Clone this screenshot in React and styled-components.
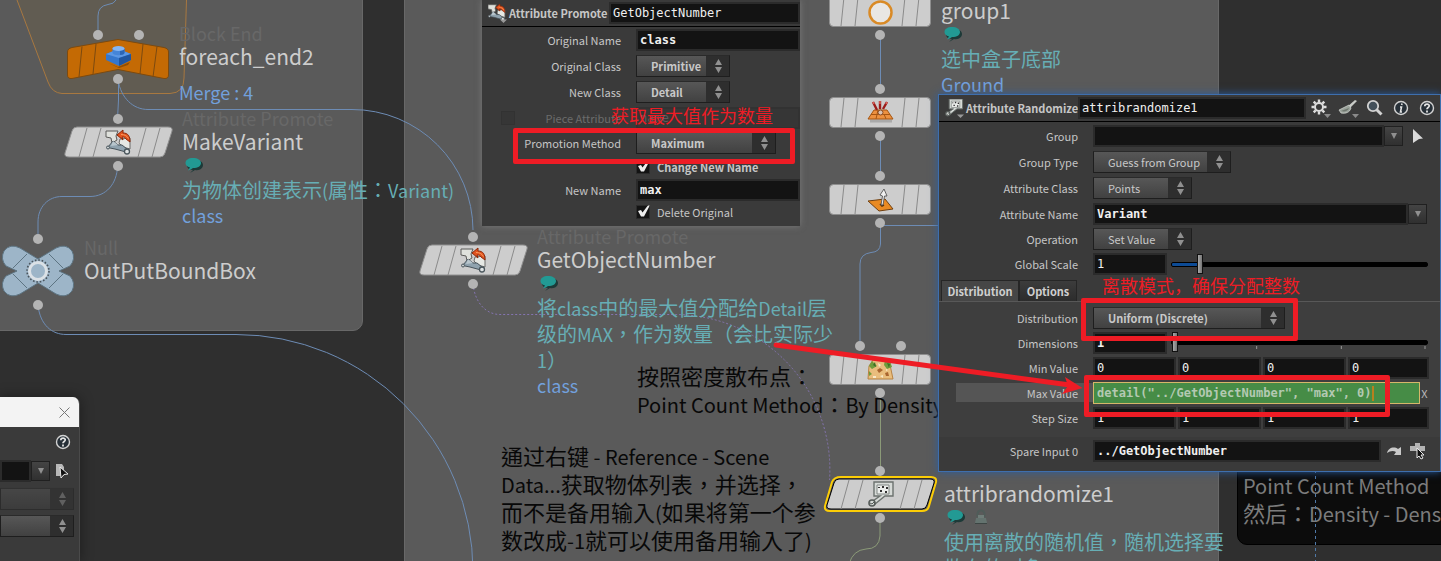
import React from "react";
import styled, { createGlobalStyle, css } from "styled-components";

const SANS = '"Noto Sans CJK TC", "Noto Sans CJK SC", sans-serif';
const MONO = '"DejaVu Sans Mono", "Liberation Mono", monospace';
const RED = "#ee1c25";
const WIRE = "#6d8cb5";

const GlobalStyle = createGlobalStyle`
  * { box-sizing: border-box; }
  body { margin: 0; background: #2f2f2f; font-family: ${SANS}; }
  input, select, button { font-family: inherit; margin: 0; border-radius: 0; }
`;

/* ---------- canvas ---------- */
const Canvas = styled.main`
  position: relative;
  width: 100%;
  height: 100vh;
  overflow: hidden;
  background: #2f2f2f;
`;
const NetworkBox = styled.section`
  position: absolute;
  left: ${(p) => p.$x}px;
  top: -10px;
  width: ${(p) => p.$w}px;
  ${(p) => (p.$h ? `height: ${p.$h}px;` : "bottom: -10px;")}
  background: #5a5a5a;
  border: 1px solid #686868;
  border-radius: 10px;
`;
const Overlay = styled.svg`
  position: absolute;
  left: 0;
  top: 0;
  width: 100%;
  height: 100%;
  overflow: visible;
  pointer-events: none;
  fill: none;
`;

/* ---------- nodes ---------- */
const NodeWrap = styled.article`
  position: absolute;
  left: ${(p) => p.$x}px;
  top: ${(p) => p.$y}px;
  display: flex;
  align-items: flex-start;
  gap: 10px;
`;
const Glyph = styled.svg`
  flex: none;
  margin-top: 2px;
  overflow: visible;
`;
const NodeInfo = styled.div`
  white-space: nowrap;
`;
const TypeName = styled.div`
  height: 22px;
  line-height: 22px;
  font-size: 18px;
  color: #686868;
`;
const NodeName = styled.div`
  height: 24px;
  line-height: 24px;
  font-size: 21px;
  color: #cdcdcd;
`;
const Badges = styled.div`
  height: 24px;
  display: flex;
  align-items: center;
  gap: 7px;
  padding-left: 2px;
`;
const Comment = styled.p`
  margin: 0;
  line-height: 26px;
  font-size: 18px;
  color: #67aeb5;
`;
const Descriptor = styled.div`
  margin-top: ${(p) => p.$gap || 0}px;
  line-height: 24px;
  font-size: 18px;
  color: #72a0dc;
`;
const Cjk = styled.span`
  font-size: ${(p) => p.$size}px;
`;
const Mixed = ({ text, size }) =>
  text.split(/([\u2e80-\uffef]+)/).filter(Boolean).map((run, i) =>
    /[\u2e80-\uffef]/.test(run) ? <Cjk key={i} $size={size}>{run}</Cjk> : run
  );

const Note = styled.p`
  position: absolute;
  left: ${(p) => p.$x}px;
  top: ${(p) => p.$y}px;
  margin: 0;
  white-space: nowrap;
  line-height: 27px;
  font-size: 20px;
  color: #080808;
`;
const DarkNote = styled.aside`
  position: absolute;
  left: 1237px;
  top: 440px;
  width: 300px;
  height: 105px;
  padding: 31px 5px 0;
  background: #0c0c0c;
  border: 1px solid #000;
  border-radius: 10px;
  white-space: nowrap;
  line-height: 27px;
  font-size: 20px;
  color: #7c7c7c;
`;

const Bubble = () => (
  <svg width="20" height="16" viewBox="0 0 20 16" aria-hidden="true">
    <path d="M5 15l3-3C3 12 2 9 2 7c0-3 3-5 8-5s8 2 8 5-3 6-8 5z" fill="#1d3a38" transform="translate(1 1)" />
    <path d="M4 13.500l2-3C3 10 1.500 8 1.500 6c0-3 3-5 7.500-5s8 2 8 5-3 5-8 5c-1.500 1-3 2-5 2.500z" fill="#229a94" />
  </svg>
);
const LockBadge = () => (
  <svg width="16" height="16" viewBox="0 0 16 16" aria-hidden="true">
    <path d="M4.500 8V5a3.500 3.500 0 0 1 7 0v3" stroke="#4f5c59" strokeWidth="2" fill="none" />
    <path d="M5 6h6v3H5z" fill="#6f7d79" />
    <path d="M3 9h10l1 5H2z" fill="#64736f" />
    <path d="M2 14.500h12" stroke="#3c4543" />
  </svg>
);

const Dot = ({ x, y }) => <circle cx={x} cy={y} r="5" fill="#b4b4b4" />;

const PromoteArt = () => (
  <g strokeLinejoin="round">
    <path d="M0 1H12L10 6L11 10L6 13L5 8L0 7z" fill="#dfe1dc" stroke="#5a5a58" />
    <path d="M14 9L24 8V19L17 17L13 13z" fill="#e6e8e4" stroke="#6c6c6a" />
    <path d="M2 17L7 11L12 15L16 15L21 19L20 22L9 19L4 18z" fill="#8fa2ae" stroke="#47535b" />
    <path d="M7 11L12 15L5 16z" fill="#b9c6cd" />
    <path d="M11 5L17 0V3C22 3 24 6 24 12L20 9C19 7 18 7 16 7L17 10z" fill="#e2531f" stroke="#8c2808" />
    <path d="M15 4.500C19 4.500 21 6 22.500 8.500" fill="none" stroke="#f79a5c" />
    <circle cx="21" cy="21.500" r="2.500" fill="#dfe3e4" stroke="#4a565c" strokeWidth="1.300" />
    <circle cx="2" cy="17.500" r="1.500" fill="#c9ced0" stroke="#4a565c" />
  </g>
);
const BlockArt = () => (
  <g>
    <path d="M2 18L12 22L24 17L22 20L13 23z" fill="#5b3000" opacity=".5" />
    <path d="M0 9L12.500 4L25 9V15L13 21L0 15z" fill="#3577cd" />
    <path d="M0 9L12.500 4L25 9L13 13z" fill="#5b97e4" />
    <path d="M13 13L25 9V15L13 21z" fill="#1f559f" />
    <path d="M6.500 3.500V8C8 11 17 11 18.500 8V3.500z" fill="#4585d8" />
    <path d="M14 10C17 10 18 9 18.500 8V3.500H14z" fill="#2c66b5" />
    <ellipse cx="12.500" cy="3.500" rx="6" ry="2.500" fill="#86b6f2" />
  </g>
);
const RingArt = () => (
  <circle cx="12.500" cy="12.500" r="11" fill="#e9e7e4" stroke="#d98a26" strokeWidth="2.500" />
);
const ScatterArt = () => (
  <g>
    <path d="M2 20H24" stroke="#888" strokeWidth="3" opacity=".5" />
    <path d="M6 9H19L25 18H0z" fill="#ec9140" stroke="#a65511" />
    <path d="M10 9L8 18M16 13L18 18M3 13.500H22" stroke="#a65511" />
    <path d="M5 1L9 9M12 0V8M19 1L15 8" stroke="#9c1d1a" strokeWidth="2.400" />
    <path d="M5 1L6 3M12 0V3M19 1L18 3" stroke="#d9605a" strokeWidth="1.500" />
    <circle cx="12.500" cy="11.500" r="2.500" fill="#d8c3b4" stroke="#8b4b22" />
  </g>
);
const NormalArt = () => (
  <g>
    <path d="M0 13L17 11L25 21L11 23z" fill="#e98a22" stroke="#704010" />
    <path d="M12 16L14 18L16 17" fill="none" stroke="#5b3208" strokeWidth="1.500" />
    <path d="M13 17L14.500 8L12 7L16 1L19 8L16.500 8L15 17z" fill="#f0f0f0" stroke="#555" strokeWidth=".9" />
  </g>
);
const TerrainArt = () => (
  <g>
    <path d="M1 8L5 2H21L25 21H0z" fill="#e9bd7d" stroke="#b88342" />
    <path d="M4 3L9 8L4 11L1 8zM17 2L22 3L24 9L19 11L16 7zM1 13L4 16L1 18z" fill="#6f9c3c" />
    <path d="M5 7L7 4L8 9zM19 5L22 6L21 10z" fill="#3f6f25" />
    <path d="M9 12L12 10L15 12L11 15zM17 15L20 14L21 18L18 18z" fill="#a9652f" />
    <path d="M10 5L13 7L11 9zM5 18H8V20H5zM12 18L15 17V20zM18 11L20 12L18 13z" fill="#f8e9c8" />
  </g>
);
const RandomArt = () => (
  <g>
    <path d="M6 0H25V14H17L7 22L5 19L12 14H6z" fill="#d6dad7" stroke="#6c726f" strokeWidth="1.400" />
    <path d="M9 3H21V12H9z" fill="#eceeec" stroke="#808683" />
    <path d="M10 5H12V6H10zM14 4H16V6H14zM18 5H20V7H18zM12 8H14V10H12zM17 9H19V11H17z" fill="#333" />
    <circle cx="4" cy="21" r="3" fill="#d6dad7" stroke="#555b58" strokeWidth="1.600" />
    <path d="M2 21L4 22L6 20" fill="none" stroke="#555b58" />
  </g>
);

const SlantBody = ({ selected, art }) => (
  <g>
    <g transform="translate(1 0)">
      {selected && (
        <path d="M14 16H104Q110 16 109 21L102 45Q101 50 95 50H3Q-3 50 -2 45L5 21Q7 16 14 16z" fill="none" stroke="#fccd06" strokeWidth="2" />
      )}
      <path d="M12 18H103Q108 18 107 22L100 44Q99 48 95 48H4Q-1 48 0 44L7 22Q8 18 12 18z" fill="#cdcdcd" stroke={selected ? "#000" : "#909090"} />
      <path d="M22 19L14 48M36 19L28 48M81 19L73 48M95 19L87 48" stroke="#8a8a8a" />
    </g>
    <g transform="translate(42 21)">{art}</g>
  </g>
);
const FlatBody = ({ art }) => (
  <g>
    <rect x=".5" y="18.500" width="101" height="30" rx="4" fill="#cdcdcd" stroke="#8e8e8e" />
    <path d="M15 19L12 48M29 19L26 48M76 19L73 48M90 19L87 48" stroke="#8a8a8a" />
    <g transform="translate(39 22)">{art}</g>
  </g>
);

const FlatNode = ({ y, art, ins = [51], children }) => (
  <NodeWrap $x={829} $y={y}>
    <Glyph width="102" height="64">
      <FlatBody art={art} />
      {ins.map((x) => <Dot key={x} x={x} y={10} />)}
      <Dot x={51} y={57} />
    </Glyph>
    {children}
  </NodeWrap>
);

/* ---------- parameter windows ---------- */
const Window = styled.section`
  position: absolute;
  left: ${(p) => p.$x}px;
  top: ${(p) => p.$y}px;
  width: ${(p) => p.$w}px;
  overflow: hidden;
  background: #3a3a3a;
  color: #c6c6c6;
  font-size: 11px;
  ${(p) =>
    p.$active
      ? css`border: 1px solid #3e6fae; box-shadow: 0 0 8px #2a5da0;`
      : css`box-shadow: 0 0 6px #7a7a7a;`}
`;
const Header = styled.header`
  display: flex;
  align-items: center;
  height: ${(p) => p.$h}px;
  padding-left: 6px;
  border-bottom: 1px solid #000;
`;
const Title = styled.h2`
  flex: none;
  width: ${(p) => p.$w}px;
  margin: 0;
  padding-left: 2px;
  font-size: 11px;
  line-height: 20px;
  font-weight: 700;
  white-space: nowrap;
`;
const Rows = styled.div`
  padding: ${(p) => p.$pad || "2px 0"};
  background: ${(p) => p.$bg || "transparent"};
`;
const Row = styled.div`
  display: grid;
  grid-template-columns: 154px minmax(0, 1fr);
  align-items: center;
  height: ${(p) => p.$h || 26}px;
  padding-right: ${(p) => p.$right || 0}px;
`;
const LabelCell = styled.div`
  display: flex;
  align-items: center;
  justify-content: flex-end;
  height: 19px;
  margin-left: 17px;
  padding-right: 15px;
  background: ${(p) => (p.$lit ? "#555" : "transparent")};
  color: ${(p) => (p.$dim ? "#6c6c6c" : "#c6c6c6")};
  white-space: nowrap;
`;
const Controls = styled.div`
  display: flex;
  align-items: center;
`;
const Field = styled.input.attrs({ spellCheck: false })`
  flex: ${(p) => (p.$w ? "none" : "1")};
  width: ${(p) => (p.$w ? p.$w + "px" : "100%")};
  min-width: 0;
  height: 22px;
  padding: 0 2px;
  border: 2px solid #2b2b2b;
  background: #131313;
  color: #f0f0f0;
  outline: none;
  font-family: ${MONO};
  font-size: 12px;
  font-weight: ${(p) => (p.$bold ? 700 : 400)};
  &:disabled { background: #363636; border-color: #323232; color: #5c5c5c; }
`;
const ExprWrap = styled.div`
  position: relative;
  flex: 1;
  display: flex;
`;
const ExprField = styled(Field)`
  background: #468c46;
  border: 1px solid #d6b76a;
  padding: 0 3px;
  color: #b4c9b2;
`;
const Caret = styled.span`
  position: absolute;
  left: 279px;
  top: 4px;
  width: 2px;
  height: 15px;
  background: #b8801e;
`;
const SelectWrap = styled.div`
  position: relative;
  width: ${(p) => p.$w}px;
  height: 22px;
  border: 1px solid #1e1e1e;
  border-top-color: #2a2a2a;
  background: linear-gradient(90deg, transparent calc(100% - 23px), #2e2e2e 0),
    linear-gradient(#575757, #414141);
  opacity: ${(p) => (p.$off ? 0.45 : 1)};
  svg { position: absolute; right: 6px; top: 3px; pointer-events: none; }
`;
const Select = styled.select`
  appearance: none;
  display: block;
  width: 100%;
  height: 20px;
  padding: 0 24px 0 14px;
  border: 0;
  outline: none;
  background: transparent;
  color: #c8c8c8;
  font-size: 11px;
  font-weight: ${(p) => (p.$bold ? 700 : 400)};
`;
const UpDown = () => (
  <svg width="9" height="14" viewBox="0 0 9 14" aria-hidden="true">
    <path d="M4.500 0L8 6H1zM4.500 14L8 8H1z" fill="#909090" />
  </svg>
);
const Menu = ({ id, w, bold, value, label }) => (
  <SelectWrap $w={w}>
    <Select id={id} $bold={bold} aria-label={label}><option>{value}</option></Select>
    <UpDown />
  </SelectWrap>
);
const DropButton = styled.button`
  flex: none;
  width: 19px;
  height: 20px;
  padding: 0;
  border: 1px solid #202020;
  background: linear-gradient(#444, #303030);
  display: grid;
  place-items: center;
`;
const IconButton = styled.button`
  flex: none;
  width: ${(p) => p.$w || 26}px;
  height: 22px;
  padding: 0;
  border: 0;
  background: transparent;
  display: grid;
  place-items: center;
`;
const Down = () => (
  <svg width="8" height="8" viewBox="0 0 8 8" aria-hidden="true"><path d="M1 1h6L4 7z" fill="#909090" /></svg>
);
const CheckLabel = styled.label`
  display: flex;
  align-items: center;
  gap: 7px;
  font-weight: ${(p) => (p.$bold ? 700 : 400)};
`;
const CheckBox = styled.span`
  position: relative;
  width: 14px;
  height: 14px;
  svg { position: absolute; left: 1px; top: -1px; pointer-events: none; }
`;
const CheckInput = styled.input`
  appearance: none;
  display: block;
  width: 14px;
  height: 14px;
  background: #131313;
  border: 1px solid #2b2b2b;
  &:disabled { background: #363636; border-color: #323232; }
`;
const Check = ({ bold, children }) => (
  <CheckLabel $bold={bold}>
    <CheckBox>
      <CheckInput type="checkbox" defaultChecked />
      <svg width="13" height="14" viewBox="0 0 13 14"><path d="M1 7L4 6L5.500 8.500L10.500 2L12.500 1L12 3L7 12.500H4z" fill="#ededed" /></svg>
    </CheckBox>
    {children}
  </CheckLabel>
);
const DisabledCheck = styled(CheckInput)`
  margin-right: auto;
  margin-left: 2px;
`;

const SliderWrap = styled.div`
  position: relative;
  flex: 1;
  height: 22px;
  margin-left: 4px;
  svg { position: absolute; left: 0; top: 14px; width: 100%; height: 3px; }
`;
const Slider = styled.input`
  appearance: none;
  display: block;
  width: 100%;
  height: 22px;
  background: transparent;
  &::-webkit-slider-runnable-track {
    height: 5px;
    border: 1px solid #000;
    border-radius: 2px;
    background: linear-gradient(90deg, #0d4b95 ${(p) => p.$fill}%, #000 0);
  }
  &::-webkit-slider-thumb {
    appearance: none;
    width: 6px;
    height: 20px;
    margin-top: -9px;
    border: 1px solid #111;
    background: linear-gradient(90deg, #a8a8a8, #777);
  }
`;

const Tabs = styled.div`
  display: flex;
  height: 24px;
  padding: 2px 2px 0;
  border-bottom: 1px solid #585858;
`;
const Tab = styled.button`
  width: ${(p) => p.$w}px;
  padding: 0;
  border: 1px solid #262626;
  border-bottom: 0;
  background: ${(p) => (p.$on ? "#464646" : "linear-gradient(#3c3c3c, #2c2c2c)")};
  color: #cfcfcf;
  font-size: 11px;
  line-height: 18px;
  font-weight: 700;
`;
const ClearExpr = styled.button`
  width: 9px;
  padding: 0;
  border: 0;
  background: transparent;
  color: #b8b8b8;
  font-size: 11px;
`;
const Quad = styled.div`
  display: grid;
  grid-template-columns: 83fr 83fr 83fr 81fr;
  gap: 2px;
`;
const QuadFields = ({ name, value }) => (
  <Quad>
    {["x", "y", "z", "w"].map((c) => <Field key={c} aria-label={`${name} ${c}`} defaultValue={value} />)}
  </Quad>
);

const Param = ({ label, id, h, right, lit, children }) => (
  <Row $h={h} $right={right}>
    <LabelCell as="label" htmlFor={id} $lit={lit}>{label}</LabelCell>
    <Controls>{children}</Controls>
  </Row>
);

const Gear = () => (
  <svg width="22" height="20" viewBox="0 0 22 20" fill="none" stroke="#dedede">
    <circle cx="9" cy="9" r="4" strokeWidth="2" />
    <path d="M9 1.500v3M9 13.500v3M1.500 9h3M13.500 9h3M3.700 3.700l2 2M12.300 12.300l2 2M14.300 3.700l-2 2M3.700 14.300l2-2" strokeWidth="2.400" />
    <path d="M14 16h7l-3.500 4z" fill="#8a8a8a" stroke="none" />
  </svg>
);
const Brush = () => (
  <svg width="22" height="20" viewBox="0 0 22 20">
    <path d="M17 2L19 3L12 10L9 9z" fill="#c9ccc8" />
    <path d="M1 12L11 7L13 10C12 14 8 16 3 15z" fill="#9ba39b" stroke="#d7dad5" strokeWidth=".7" />
    <path d="M3 13L11 10C10 13 7 14 3 13z" fill="#6f776f" />
    <path d="M14 16h7l-3.500 4z" fill="#8a8a8a" />
  </svg>
);
const Magnifier = () => (
  <svg width="18" height="18" viewBox="0 0 18 18">
    <path d="M10.500 10.500l5 5" stroke="#d2d2d2" strokeWidth="3" />
    <circle cx="7" cy="7" r="5.200" fill="#43505a" stroke="#d2d2d2" strokeWidth="1.800" />
  </svg>
);
const RoundIcon = ({ kind }) => (
  <svg width="16" height="16" viewBox="0 0 16 16" fill="none">
    <circle cx="8" cy="8" r="6.500" fill="#273038" stroke="#d2d2d2" strokeWidth="1.400" />
    {kind === "info" ? (
      <path d="M9 3.500l-.3 1.500M7 7h1.500l-1 5H9" stroke="#e4e4e4" strokeWidth="1.600" />
    ) : (
      <path d="M5.800 6.200c0-3 4.600-2.600 4.400-.2C10 7.500 8 7.500 8 9.300M8 10.600v1.800" stroke="#e4e4e4" strokeWidth="1.800" />
    )}
  </svg>
);
const Pointer = () => (
  <svg width="14" height="16" viewBox="0 0 14 16"><path d="M3 1L13 10.500L9 11L3 15z" fill="#dadada" /></svg>
);
const JumpIcon = () => (
  <svg width="15" height="12" viewBox="0 0 15 12">
    <path d="M0 8C1 3 7 1 11 4L14 2V10H7L9 7C6 5 3 6 0 8z" fill="#c9c9c9" />
  </svg>
);
const PickIcon = () => (
  <svg width="18" height="17" viewBox="0 0 18 17">
    <path d="M6 0h5v3H6zM1 3h15v5H1z" fill="#b4b4b4" />
    <path d="M8 5L15 12H12L14 15L12 16L10 13L8 15z" fill="#111" stroke="#e8e8e8" />
  </svg>
);
const FilePick = () => (
  <svg width="14" height="16" viewBox="0 0 14 16">
    <path d="M1 1h6l2 3v9H1z" fill="#b8b8b8" />
    <path d="M5 4L13 11L9 11.500L6 15z" fill="#111" stroke="#e8e8e8" />
  </svg>
);
const TypeIcon = ({ children }) => (
  <svg width="19" height="19" viewBox="0 0 27 27" aria-hidden="true">
    {children}
    <path d="M17 22h10l-5 5z" fill="#999" />
  </svg>
);

/* ---------- left dialog ---------- */
const Dialog = styled.section`
  position: absolute;
  left: -1px;
  top: 397px;
  bottom: -1px;
  width: 81px;
  background: #3a3a3a;
  border: 1px solid #4a4a4a;
  border-top: 0;
  border-top-right-radius: 7px;
  overflow: hidden;
  box-shadow: 0 0 14px rgba(0, 0, 0, 0.4);
`;
const DialogBar = styled.header`
  display: flex;
  justify-content: flex-end;
  align-items: center;
  height: 30px;
  padding-right: 2px;
  background: #f3f3f3;
`;
const DialogLine = styled.div`
  display: flex;
  align-items: center;
  justify-content: flex-end;
  height: ${(p) => p.$h || 29}px;
  padding-right: ${(p) => p.$right || 5}px;
`;

/* ---------- red mark-up ---------- */
const Frame = styled.div`
  position: absolute;
  left: ${(p) => p.$x}px;
  top: ${(p) => p.$y}px;
  width: ${(p) => p.$w}px;
  height: ${(p) => p.$h}px;
  border: 5px solid ${RED};
  border-radius: 2px;
  pointer-events: none;
`;
const Remark = styled.p`
  position: absolute;
  left: ${(p) => p.$x}px;
  top: ${(p) => p.$y}px;
  margin: 0;
  color: ${RED};
  font-family: "Noto Sans CJK SC", sans-serif;
  font-size: 18px;
  line-height: 20px;
  white-space: nowrap;
`;

const Wires = () => (
  <Overlay stroke={WIRE} aria-hidden="true">
    <path d="M17 0L48 82Q52 93 62 93.500H170Q184 93 184 78L186.500 0" fill="#7a6238" fillOpacity=".22" stroke="#a87840" />
    <path d="M116 0Q114 4 108 4.500Q98 6 98 16V35" />
    <path d="M118.500 80V100L117.500 119M118 80C121 98 133 109.500 148 109.500H352A121 121 0 0 1 473 230" />
    <path d="M117.500 166C117 184 106 196.500 90 196.500H62C48 196.500 38 207 38 222V239" />
    <path d="M38 305C40 325 52 334.500 66 334.500H236A237 237 0 0 1 473 571" />
    <path d="M473 284C475 303 486 314.500 500 314.500H675A155 155 0 0 1 829.500 480" stroke="#8474b0" strokeDasharray="2 2" />
    <path d="M880.500 35V89M880.500 136V175M880.500 223V244Q880 252 871 252.500Q860 254 860 264V346M882 225.500H1000" />
    <path d="M880.500 394V472M880 519V536Q879 549 866 549Q853 550 849 564" stroke="#8b9a78" />
    <path d="M1315.500 470V570" strokeDasharray="3 3" stroke="#4f79a8" />
  </Overlay>
);

const PromoteWindow = () => (
  <Window $x={482} $y={0} $w={318}>
    <Header $h={27}>
      <TypeIcon><PromoteArt /></TypeIcon>
      <Title $w={102}>Attribute Promote</Title>
      <Field aria-label="Node name" defaultValue="GetObjectNumber" />
    </Header>
    <Rows $pad="0 0 3px">
      <Param label="Original Name" id="orig"><Field id="orig" $bold defaultValue="class" /></Param>
      <Param label="Original Class" id="oclass"><Menu id="oclass" w={94} bold value="Primitive" /></Param>
      <Param label="New Class" id="nclass"><Menu id="nclass" w={94} bold value="Detail" /></Param>
      <Row>
        <LabelCell $dim>
          <DisabledCheck type="checkbox" disabled aria-label="Use piece attribute" />
          <label htmlFor="piece">Piece Attribute</label>
        </LabelCell>
        <Field id="piece" disabled defaultValue="name" />
      </Row>
      <Param label="Promotion Method" id="method" h={24}><Menu id="method" w={140} bold value="Maximum" /></Param>
      <Row $h={23}><span /><Check bold>Change New Name</Check></Row>
      <Param label="New Name" id="nname" h={23}><Field id="nname" $bold defaultValue="max" /></Param>
      <Row $h={22}><span /><Check>Delete Original</Check></Row>
    </Rows>
  </Window>
);

const RandomizeWindow = () => (
  <Window $x={938} $y={94} $w={503} $active>
    <Header $h={27}>
      <TypeIcon><RandomArt /></TypeIcon>
      <Title $w={114}>Attribute Randomize</Title>
      <Field aria-label="Node name" defaultValue="attribrandomize1" />
      <IconButton $w={30} aria-label="Gear menu"><Gear /></IconButton>
      <IconButton aria-label="Presets"><Brush /></IconButton>
      <IconButton aria-label="Search"><Magnifier /></IconButton>
      <IconButton aria-label="Info"><RoundIcon kind="info" /></IconButton>
      <IconButton aria-label="Help"><RoundIcon kind="help" /></IconButton>
    </Header>
    <Rows $pad="1px 0">
      <Param label="Group" id="group" right={9}>
        <Field id="group" defaultValue="" />
        <DropButton aria-label="Group list"><Down /></DropButton>
        <IconButton $w={28} aria-label="Select group"><Pointer /></IconButton>
      </Param>
      <Param label="Group Type" id="gtype"><Menu id="gtype" w={138} value="Guess from Group" /></Param>
      <Param label="Attribute Class" id="aclass"><Menu id="aclass" w={99} value="Points" /></Param>
      <Param label="Attribute Name" id="aname" right={13}>
        <Field id="aname" $bold defaultValue="Variant" />
        <DropButton aria-label="Attribute list"><Down /></DropButton>
      </Param>
      <Param label="Operation" id="op" h={24}><Menu id="op" w={99} value="Set Value" /></Param>
      <Param label="Global Scale" id="scale" right={12}>
        <Field id="scale" $w={74} defaultValue="1" />
        <SliderWrap><Slider type="range" min="0" max="10" defaultValue="1" $fill={10} aria-label="Global scale slider" /></SliderWrap>
      </Param>
    </Rows>
    <Tabs role="tablist">
      <Tab role="tab" aria-selected="true" $on $w={78}>Distribution</Tab>
      <Tab role="tab" aria-selected="false" $w={58}>Options</Tab>
    </Tabs>
    <Rows $pad="3px 0 7px" $bg="#3e3e3e">
      <Param label="Distribution" id="dist" h={25}><Menu id="dist" w={192} bold value="Uniform (Discrete)" /></Param>
      <Param label="Dimensions" id="dims" h={25} right={12}>
        <Field id="dims" $w={74} $bold defaultValue="1" />
        <SliderWrap>
          <Slider type="range" min="1" max="4" defaultValue="1" $fill={0} aria-label="Dimensions slider" />
          <svg viewBox="0 0 258 3" preserveAspectRatio="none"><path d="M86 0v3M171 0v3M255 0v3" stroke="#999" /></svg>
        </SliderWrap>
      </Param>
      <Row $h={25} $right={11}><LabelCell>Min Value</LabelCell><QuadFields name="Min Value" value="0" /></Row>
      <Param label="Max Value" id="maxv" h={25} right={11} lit>
        <ExprWrap>
          <ExprField id="maxv" $bold defaultValue={'detail("../GetObjectNumber", "max", 0)'} />
          <Caret />
        </ExprWrap>
        <ClearExpr aria-label="Clear expression">X</ClearExpr>
      </Param>
      <Row $h={25} $right={11}><LabelCell>Step Size</LabelCell><QuadFields name="Step Size" value="1" /></Row>
    </Rows>
    <Rows $pad="1px 0 7px">
      <Param label="Spare Input 0" id="spare" right={11}>
        <Field id="spare" $bold defaultValue="../GetObjectNumber" />
        <IconButton aria-label="Jump to operator"><JumpIcon /></IconButton>
        <IconButton $w={22} aria-label="Choose operator"><PickIcon /></IconButton>
      </Param>
    </Rows>
  </Window>
);

export default function App() {
  return (
    <Canvas>
      <GlobalStyle />
      <NetworkBox $x={-10} $w={373} $h={341} />
      <NetworkBox $x={404} $w={815} />
      <DarkNote>
        Point Count Method<br />
        <Mixed text="然后：Density - Dens" size={22} />
      </DarkNote>
      <Wires />

      <NodeWrap $x={67} $y={22}>
        <Glyph width="102" height="64">
          <path d="M5 23.500L51 15.500L97 23.500Q101.500 24.500 101.500 28V51Q101.500 55 97 54.500L51 45.500L5 54.500Q.5 55 .5 51V28Q.5 24.500 5 23.500z" fill="#c46a04" stroke="#7c4a10" />
          <path d="M15 22.500L12 53M29 20L26 50M76 20L73 50M90 22.500L86 53" stroke="#7c4a10" />
          <g transform="translate(39 21)"><BlockArt /></g>
          <Dot x={31} y={11} /><Dot x={72} y={11} /><Dot x={51} y={55} />
        </Glyph>
        <NodeInfo>
          <TypeName>Block End</TypeName>
          <NodeName>foreach_end2</NodeName>
          <Descriptor $gap={12}>Merge : 4</Descriptor>
        </NodeInfo>
      </NodeWrap>

      <NodeWrap $x={64} $y={107}>
        <Glyph width="108" height="64">
          <SlantBody art={<PromoteArt />} />
          <Dot x={54} y={10} /><Dot x={54} y={57} />
        </Glyph>
        <NodeInfo>
          <TypeName>Attribute Promote</TypeName>
          <NodeName>MakeVariant</NodeName>
          <Badges><Bubble /></Badges>
          <Comment><Mixed text="为物体创建表示(属性：Variant)" size={20} /></Comment>
          <Descriptor>class</Descriptor>
        </NodeInfo>
      </NodeWrap>

      <NodeWrap $x={2} $y={236}>
        <Glyph width="72" height="72">
          <g transform="translate(36 33)">
            <g fill="#9db5c8" stroke="#5d7482">
              <path d="M-21 0L-32 -5Q-38 -12 -34 -20Q-28 -28 -18 -23L0 -12L18 -23Q28 -28 34 -20Q38 -12 32 -5L21 0L32 5Q38 12 34 20Q28 28 18 23L0 12L-18 23Q-28 28 -34 20Q-38 12 -32 5z" />
              <path d="M-11 -17L-25 -3M11 -17L25 -3M-11 17L-25 3M11 17L25 3" />
            </g>
            <circle r="8.500" fill="#9db5c8" stroke="#dbe1e6" strokeWidth="3" />
            <circle r="11" fill="none" stroke="#4a545c" strokeDasharray="1.600 1.850" strokeWidth="1.600" />
          </g>
          <Dot x={36} y={1} /><Dot x={36} y={67} />
        </Glyph>
        <NodeInfo>
          <TypeName>Null</TypeName>
          <NodeName>OutPutBoundBox</NodeName>
        </NodeInfo>
      </NodeWrap>

      <NodeWrap $x={419} $y={225}>
        <Glyph width="108" height="64">
          <SlantBody art={<PromoteArt />} />
          <Dot x={54} y={10} /><Dot x={54} y={57} />
        </Glyph>
        <NodeInfo>
          <TypeName>Attribute Promote</TypeName>
          <NodeName>GetObjectNumber</NodeName>
          <Badges><Bubble /></Badges>
          <Comment>
            <Mixed text="将class中的最大值分配给Detail层" size={20} /><br />
            <Mixed text="级的MAX，作为数量（会比实际少" size={20} /><br />
            <Mixed text="1）" size={20} />
          </Comment>
          <Descriptor>class</Descriptor>
        </NodeInfo>
      </NodeWrap>

      <FlatNode y={-24} art={<RingArt />}>
        <NodeInfo>
          <TypeName />
          <NodeName>group1</NodeName>
          <Badges><Bubble /></Badges>
          <Comment><Mixed text="选中盒子底部" size={20} /></Comment>
          <Descriptor>Ground</Descriptor>
        </NodeInfo>
      </FlatNode>
      <FlatNode y={77} art={<ScatterArt />} />
      <FlatNode y={164} art={<NormalArt />} />
      <FlatNode y={334} art={<TerrainArt />} ins={[31, 72]} />

      <NodeWrap $x={826} $y={459}>
        <Glyph width="108" height="64">
          <SlantBody selected art={<RandomArt />} />
          <Dot x={54} y={10} /><Dot x={54} y={57} />
        </Glyph>
        <NodeInfo>
          <TypeName />
          <NodeName>attribrandomize1</NodeName>
          <Badges><Bubble /><LockBadge /></Badges>
          <Comment>
            <Mixed text="使用离散的随机值，随机选择要" size={20} /><br />
            <Mixed text="散布的对象" size={20} />
          </Comment>
        </NodeInfo>
      </NodeWrap>

      <Note $x={637} $y={362}>
        <Mixed text="按照密度散布点：" size={22} /><br />
        <Mixed text="Point Count Method：By Density" size={22} />
      </Note>
      <Note $x={501} $y={442}>
        <Mixed text="通过右键 - Reference - Scene" size={22} /><br />
        <Mixed text="Data...获取物体列表，并选择，" size={22} /><br />
        <Mixed text="而不是备用输入(如果将第一个参" size={22} /><br />
        <Mixed text="数改成-1就可以使用备用输入了)" size={22} />
      </Note>

      <PromoteWindow />
      <RandomizeWindow />

      <Dialog>
        <DialogBar>
          <IconButton aria-label="Close">
            <svg width="11" height="11" viewBox="0 0 11 11"><path d="M.5.5l10 10M10.500.5l-10 10" stroke="#777" /></svg>
          </IconButton>
        </DialogBar>
        <DialogLine $right={3}><IconButton aria-label="Help"><RoundIcon kind="help" /></IconButton></DialogLine>
        <DialogLine>
          <Field aria-label="File" defaultValue="" />
          <DropButton aria-label="Recent files"><Down /></DropButton>
          <IconButton $w={24} aria-label="Choose file"><FilePick /></IconButton>
        </DialogLine>
        <DialogLine $h={27}>
          <SelectWrap $w={90} $off><Select disabled aria-label="Format" /><UpDown /></SelectWrap>
        </DialogLine>
        <DialogLine $h={27}>
          <SelectWrap $w={90}><Select aria-label="Mode" /><UpDown /></SelectWrap>
        </DialogLine>
      </Dialog>

      <Frame $x={513} $y={128} $w={282} $h={36} />
      <Frame $x={1081} $y={298} $w={217} $h={43} />
      <Frame $x={1084} $y={375} $w={306} $h={42} />
      <Remark $x={611} $y={105}>获取最大值作为数量</Remark>
      <Remark $x={1102} $y={275}>离散模式，确保分配整数</Remark>
      <Overlay aria-hidden="true">
        <path d="M776 345L1070 385" stroke={RED} strokeWidth="5" strokeLinecap="round" />
        <path d="M1082.500 388L1065 377L1068 386L1062 394z" fill={RED} />
      </Overlay>
    </Canvas>
  );
}
